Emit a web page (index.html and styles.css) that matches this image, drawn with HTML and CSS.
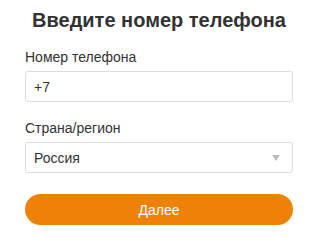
FILE: index.html
```html
<!DOCTYPE html>
<html lang="ru">
<head>
<meta charset="utf-8">
<link rel="stylesheet" href="styles.css">
</head>
<body>
<div class="form">
  <h1 class="title">Введите номер телефона</h1>
  <label class="label">Номер телефона</label>
  <div class="field">+7</div>
  <label class="label">Страна/регион</label>
  <div class="field select">
    <span>Россия</span>
    <svg class="arrow" width="8" height="6" viewBox="0 0 8 6"><path d="M0 0H8L4 6Z" fill="#bdbdbd"/></svg>
  </div>
  <button class="btn">Далее</button>
</div>
</body>
</html>
```
FILE: styles.css
```css
html, body { margin: 0; padding: 0; background: #fff; }
body { font-family: "Liberation Sans", Arial, sans-serif; color: #333; }
.form { width: 268px; margin-left: 25px; padding-top: 7px; display: flex; flex-direction: column; }
.title { margin: 0 0 16px; font-size: 20px; font-weight: bold; text-align: center; color: #333; line-height: 26px; }
.label { font-size: 14px; line-height: 16px; color: #333; margin-bottom: 6px; }
.field { box-sizing: border-box; height: 31px; border: 1px solid #dcdcdc; border-radius: 3px; padding: 0 8px; font-size: 14px; display: flex; align-items: center; color: #333; margin-bottom: 18px; }
.select { justify-content: space-between; padding-right: 12px; margin-bottom: 21px; }
.btn { height: 31px; border: none; border-radius: 16px; background: #ee8208; color: #fff; font-family: inherit; font-size: 14px; padding: 0; }
```
